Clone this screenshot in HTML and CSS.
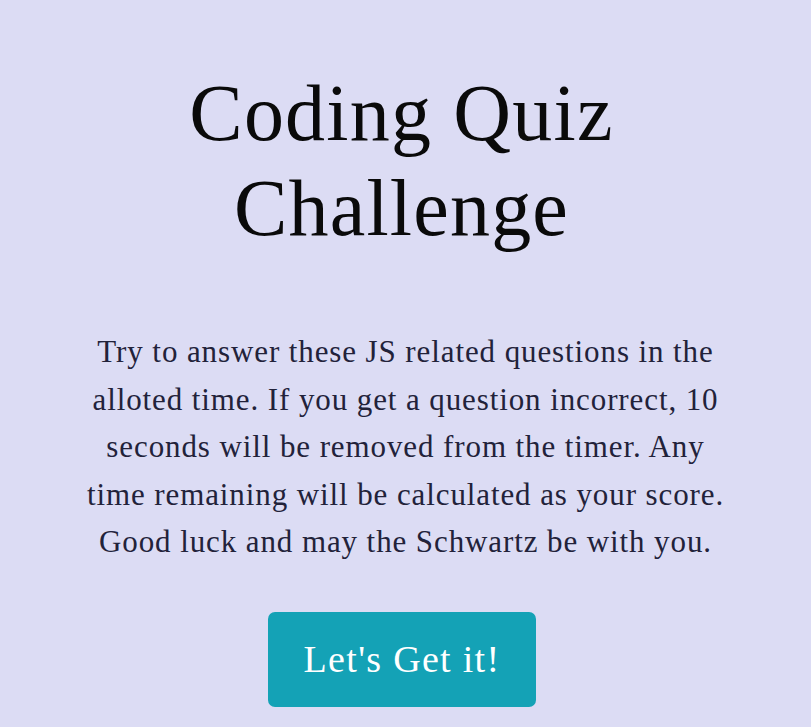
FILE: index.html
```html
<!DOCTYPE html>
<html lang="en">
<head>
<meta charset="utf-8">
<title>Coding Quiz Challenge</title>
<link rel="stylesheet" href="styles.css">
</head>
<body>
<main class="intro">
  <h1 class="title">Coding Quiz<br>Challenge</h1>
  <p class="lead">Try to answer these JS related questions in the<br>alloted time. If you get a question incorrect, 10<br>seconds will be removed from the timer. Any<br>time remaining will be calculated as your score.<br>Good luck and may the Schwartz be with you.</p>
  <button class="start" type="button">Let's Get it!</button>
</main>
</body>
</html>
```
FILE: styles.css
```css
html, body {
  margin: 0;
  padding: 0;
}
body {
  background: #dcdcf4;
  font-family: "Liberation Serif", "DejaVu Serif", serif;
  color: #111;
  min-height: 727px;
}
.intro {
  display: flex;
  flex-direction: column;
  align-items: center;
  text-align: center;
  padding-top: 66px;
}
.title {
  margin: 0;
  padding-right: 8px;
  font-weight: normal;
  font-size: 80px;
  line-height: 95px;
  letter-spacing: 1.2px;
  color: #0a0a0a;
}
.lead {
  margin: 72px 0 0;
  font-size: 31px;
  line-height: 47.5px;
  letter-spacing: 0.9px;
  color: #22223a;
}
.start {
  margin-top: 46px;
  margin-right: 7px;
  width: 268px;
  height: 95px;
  border: none;
  border-radius: 7px;
  background: #14a2b6;
  color: #fff;
  font-family: "Liberation Serif", "DejaVu Serif", serif;
  font-size: 38px;
  letter-spacing: 1.3px;
  cursor: pointer;
}
```
